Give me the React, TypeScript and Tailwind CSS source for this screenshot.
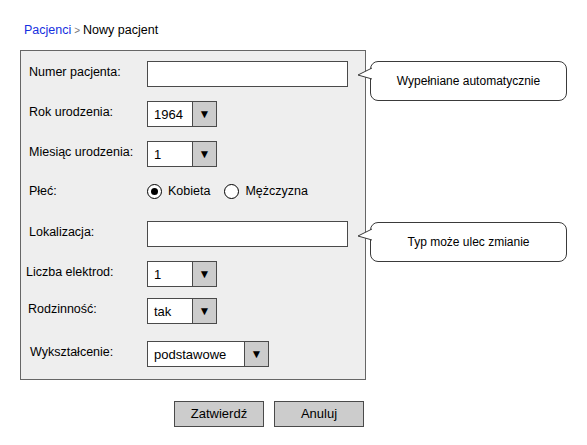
import { ReactNode } from "react";

const font = { fontFamily: '"Comic Sans MS", "Liberation Sans", Arial, sans-serif' };

function Select({ value, width }: { value: string; width: string }) {
  return (
    <div className={`flex h-[26px] ${width} border border-[#4a4a4a] bg-white`}>
      <div className="flex-1 pl-[6px] pt-[5px] text-[13px] leading-[16px]">{value}</div>
      <div className="flex w-[24px] items-center justify-center border-l border-[#4a4a4a] bg-[#cccccc] text-[12px] leading-none">
        ▼
      </div>
    </div>
  );
}

function Row({ label, children, mt, pl }: { label: string; children: ReactNode; mt: string; pl: string }) {
  return (
    <div className={`flex items-center ${mt}`}>
      <div className={`w-[126px] ${pl} pb-[4px] text-[12.5px]`}>{label}</div>
      {children}
    </div>
  );
}

function Radio({ checked, label }: { checked?: boolean; label: string }) {
  return (
    <div className="flex items-center gap-[6px]">
      <div className="flex h-[15px] w-[15px] items-center justify-center rounded-full border-[1.5px] border-black bg-white">
        {checked && <div className="h-[7px] w-[7px] rounded-full bg-black" />}
      </div>
      <span className="text-[12.5px]">{label}</span>
    </div>
  );
}

function Callout({ text, mt }: { text: string; mt: string }) {
  return (
    <div
      className={`relative ${mt} flex h-[40px] w-[197px] items-center justify-center rounded-[8px] border border-[#3a3a3a] bg-white text-[12px]`}
    >
      <svg className="absolute left-[-14px] top-[5px]" width="16" height="14" viewBox="0 0 16 14">
        <polygon points="15,1 1,8 15,12" fill="white" />
        <polyline points="15,1 1,8 15,12" fill="none" stroke="#3a3a3a" strokeWidth="1" />
      </svg>
      {text}
    </div>
  );
}

export default function App() {
  return (
    <div className="h-[445px] w-[587px] bg-white text-black" style={font}>
      <div className="pl-[24px] pt-[21px] text-[12.5px] leading-[18px]">
        <span className="text-[#1530e0]">Pacjenci</span>
        <span className="mx-[3px] text-[10px] text-[#777]">&gt;</span>
        <span>Nowy pacjent</span>
      </div>

      <div className="mt-[10px] flex">
        <div className="ml-[20px] h-[330px] w-[346px] border border-[#666] bg-[#eeeeee]">
          <Row label="Numer pacjenta:" mt="mt-[10px]" pl="pl-[8px]">
            <div className="h-[26px] w-[201px] border border-[#4a4a4a] bg-white" />
          </Row>
          <Row label="Rok urodzenia:" mt="mt-[14px]" pl="pl-[8px]">
            <Select value="1964" width="w-[70px]" />
          </Row>
          <Row label="Miesiąc urodzenia:" mt="mt-[14px]" pl="pl-[8px]">
            <Select value="1" width="w-[70px]" />
          </Row>
          <div className="mt-[14px] flex h-[20px] items-center">
            <div className="w-[126px] pl-[8px] text-[12.5px]">Płeć:</div>
            <div className="flex gap-[14px]">
              <Radio checked label="Kobieta" />
              <Radio label="Mężczyzna" />
            </div>
          </div>
          <Row label="Lokalizacja:" mt="mt-[20px]" pl="pl-[8px]">
            <div className="h-[26px] w-[201px] border border-[#4a4a4a] bg-white" />
          </Row>
          <Row label="Liczba elektrod:" mt="mt-[14px]" pl="pl-[5px]">
            <Select value="1" width="w-[70px]" />
          </Row>
          <Row label="Rodzinność:" mt="mt-[11px]" pl="pl-[7px]">
            <Select value="tak" width="w-[70px]" />
          </Row>
          <Row label="Wykształcenie:" mt="mt-[17px]" pl="pl-[9px]">
            <Select value="podstawowe" width="w-[122px]" />
          </Row>
        </div>

        <div className="ml-[4px] flex flex-col">
          <Callout text="Wypełniane automatycznie" mt="mt-[11px]" />
          <Callout text="Typ może ulec zmianie" mt="mt-[121px]" />
        </div>
      </div>

      <div className="mt-[21px] flex pl-[174px]">
        <button className="h-[26px] w-[90px] border border-[#4a4a4a] bg-[#cccccc] text-[13px]">Zatwierdź</button>
        <button className="ml-[10px] h-[26px] w-[90px] border border-[#4a4a4a] bg-[#cccccc] text-[13px]">Anuluj</button>
      </div>
    </div>
  );
}
